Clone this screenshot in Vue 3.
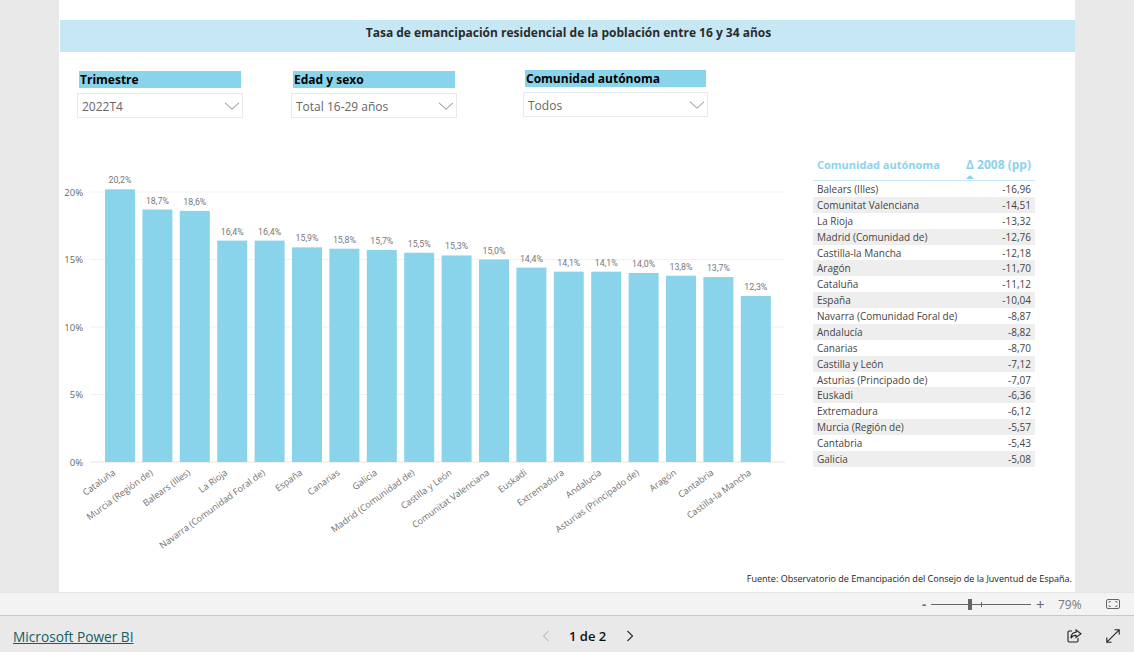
<template>
  <div class="app">
    <div class="canvas">
      <div class="title">Tasa de emancipación residencial de la población entre 16 y 34 años</div>

      <div class="slicers">
        <div v-for="s in slicers" :key="s.label" class="slicer" :class="s.cls">
          <div class="slicer-label">{{ s.label }}</div>
          <div class="slicer-box">
            <span class="slicer-value">{{ s.value }}</span>
            <svg width="16" height="8" viewBox="0 0 16 8"><path d="M1 .8 8 7.2 15 .8" fill="none" stroke="#8a8a8a" stroke-width="1" /></svg>
          </div>
        </div>
      </div>

      <div class="main">
        <svg class="chart" width="750" height="400" viewBox="59 158 750 400">
          <!-- Grid lines -->
          <g>
            <line v-for="t in ticks" :key="t" x1="90" x2="785" :y1="yOf(t)" :y2="yOf(t)" :stroke="t === 0 ? '#e6e6e6' : '#f1f1f1'" stroke-width="1" />
            <text v-for="t in ticks" :key="'t' + t" x="83" :y="yOf(t) + 3.5" text-anchor="end" class="axis">{{ t }}%</text>
          </g>

          <!-- Bars -->
          <g v-for="(b, i) in bars" :key="b.name">
            <rect :x="xOf(i)" :y="yOf(b.value)" width="30" :height="462 - yOf(b.value)" fill="#8ad4eb" />
            <text :x="xOf(i) + 15" :y="yOf(b.value) - 6" text-anchor="middle" class="value">{{ b.value.toFixed(1).replace('.', ',') }}%</text>
            <text :transform="`translate(${xOf(i) + 11} 474) rotate(-36)`" text-anchor="end" class="cat">{{ b.name }}</text>
          </g>
        </svg>

        <div class="table">
          <div class="thead">
            <span>Comunidad autónoma</span>
            <span class="delta">Δ 2008 (pp)</span>
            <i class="sort"></i>
          </div>
          <div v-for="(r, i) in rows" :key="r[0]" class="row" :class="{ odd: i % 2 === 1 }">
            <span>{{ r[0] }}</span>
            <span>{{ r[1] }}</span>
          </div>
        </div>
      </div>

      <div class="source">Fuente: Observatorio de Emancipación del Consejo de la Juventud de España.</div>
    </div>

    <div class="zoombar">
      <span class="minus">-</span>
      <div class="slider"><i class="thumb"></i><i class="tick"></i></div>
      <span class="plus">+</span>
      <span class="pct">79%</span>
      <svg class="fit" width="14" height="10" viewBox="0 0 14 10" fill="none" stroke="#666" stroke-width="1">
        <rect x=".5" y=".5" width="13" height="9" rx="1.5" />
        <path d="M3 4V2.500h2M9 2.500h2V4M11 6v1.500H9M5 7.500H3V6" stroke="#888" />
      </svg>
    </div>

    <div class="footer">
      <a class="brand">Microsoft Power BI</a>
      <div class="pager">
        <svg width="8" height="12" viewBox="0 0 8 12"><path d="M6.500 1 1.500 6l5 5" fill="none" stroke="#c4c4c4" stroke-width="1.2" /></svg>
        <span class="pages">1 de 2</span>
        <svg width="8" height="12" viewBox="0 0 8 12"><path d="M1.500 1l5 5-5 5" fill="none" stroke="#333" stroke-width="1.2" /></svg>
      </div>
      <div class="actions">
        <svg width="15" height="14" viewBox="0 0 15 14" fill="none" stroke="#222" stroke-width="1.1">
          <path d="M5 2H2.200C1.500 2 1 2.500 1 3.200v8.600c0 .7.5 1.200 1.200 1.200h7.600c.7 0 1.200-.5 1.200-1.200V9" />
          <path d="M9 1l5 3.700-5 3.800V6.300C6.500 6.200 5 7.200 4 9.200 4 5.500 6 3.400 9 3.200z" />
        </svg>
        <svg width="14" height="14" viewBox="0 0 14 14" fill="none" stroke="#222" stroke-width="1.1">
          <path d="M8.500 .8h4.700v4.700M13.200 .8 .8 13.200M.8 8.500v4.700h4.700" />
        </svg>
      </div>
    </div>
  </div>
</template>

<script setup>
const slicers = [
  { label: 'Trimestre', value: '2022T4', cls: 's1' },
  { label: 'Edad y sexo', value: 'Total 16-29 años', cls: 's2' },
  { label: 'Comunidad autónoma', value: 'Todos', cls: 's3' }
]

const ticks = [0, 5, 10, 15, 20]

const bars = [
  { name: 'Cataluña', value: 20.2 },
  { name: 'Murcia (Región de)', value: 18.7 },
  { name: 'Balears (Illes)', value: 18.6 },
  { name: 'La Rioja', value: 16.4 },
  { name: 'Navarra (Comunidad Foral de)', value: 16.4 },
  { name: 'España', value: 15.9 },
  { name: 'Canarias', value: 15.8 },
  { name: 'Galicia', value: 15.7 },
  { name: 'Madrid (Comunidad de)', value: 15.5 },
  { name: 'Castilla y León', value: 15.3 },
  { name: 'Comunitat Valenciana', value: 15.0 },
  { name: 'Euskadi', value: 14.4 },
  { name: 'Extremadura', value: 14.1 },
  { name: 'Andalucía', value: 14.1 },
  { name: 'Asturias (Principado de)', value: 14.0 },
  { name: 'Aragón', value: 13.8 },
  { name: 'Cantabria', value: 13.7 },
  { name: 'Castilla-la Mancha', value: 12.3 }
]

const rows = [
  ['Balears (Illes)', '-16,96'],
  ['Comunitat Valenciana', '-14,51'],
  ['La Rioja', '-13,32'],
  ['Madrid (Comunidad de)', '-12,76'],
  ['Castilla-la Mancha', '-12,18'],
  ['Aragón', '-11,70'],
  ['Cataluña', '-11,12'],
  ['España', '-10,04'],
  ['Navarra (Comunidad Foral de)', '-8,87'],
  ['Andalucía', '-8,82'],
  ['Canarias', '-8,70'],
  ['Castilla y León', '-7,12'],
  ['Asturias (Principado de)', '-7,07'],
  ['Euskadi', '-6,36'],
  ['Extremadura', '-6,12'],
  ['Murcia (Región de)', '-5,57'],
  ['Cantabria', '-5,43'],
  ['Galicia', '-5,08']
]

const xOf = (i) => 105 + i * 37.4
const yOf = (v) => 462 - v * 13.5
</script>

<style>
html,
body {
  margin: 0;
  background: #e9e9e9;
}
</style>

<style scoped>
.app {
  display: flex;
  flex-direction: column;
  width: 1134px;
  height: 652px;
  overflow: hidden;
  background: #e9e9e9;
  font-family: "Open Sans", "Noto Sans", sans-serif;
  color: #333;
}

.canvas {
  display: flex;
  flex-direction: column;
  box-sizing: border-box;
  width: 1016px;
  height: 592px;
  margin-left: 59px;
  padding-top: 20px;
  background: #fff;
}

.title {
  margin-left: 1px;
  padding-left: 2px;
  height: 32px;
  line-height: 25px;
  text-align: center;
  font-size: 12px;
  font-weight: 700;
  color: #2b2b2b;
  background: #c5e8f4;
}

.slicers {
  display: flex;
  margin: 18px 0 0 18px;
  height: 48px;
}

.slicer {
  display: flex;
  flex-direction: column;
  gap: 5px;
  width: 166px;
}

.s1 { margin-top: 1px; }
.s2 { margin: 1px 0 0 48px; }
.s3 { margin-left: 66px; width: 185px; }

.slicer-label {
  height: 17px;
  margin: 0 2px;
  padding-left: 1px;
  line-height: 17px;
  font-size: 12px;
  font-weight: 700;
  color: #000;
  background: #8ad4eb;
}

.slicer-box {
  display: flex;
  align-items: center;
  justify-content: space-between;
  box-sizing: border-box;
  height: 25px;
  padding: 0 2px 0 4px;
  border: 1px solid #eaeaea;
  font-size: 12px;
  color: #666;
}

.slicer-value {
  padding-top: 2px;
}

.main {
  display: flex;
  margin-top: 40px;
}

.chart {
  display: block;
  flex: none;
}

.axis {
  font-family: "Open Sans", sans-serif;
  font-size: 9.5px;
  fill: #666;
}

.value {
  font-family: Roboto, sans-serif;
  font-size: 8.8px;
  fill: #777;
}

.cat {
  font-family: "Open Sans", sans-serif;
  font-size: 9.1px;
  fill: #707070;
}

.table {
  width: 222px;
  margin-left: 4px;
  font-size: 10px;
  color: #444;
}

.thead {
  position: relative;
  display: flex;
  justify-content: space-between;
  box-sizing: border-box;
  height: 23px;
  padding: 0 4px;
  border-bottom: 1px solid #c5e8f4;
  font-size: 11px;
  font-weight: 700;
  color: #8ad4eb;
  line-height: 14px;
}

.delta {
  font-size: 12px;
}

.sort {
  position: absolute;
  left: 153px;
  bottom: 1px;
  width: 0;
  height: 0;
  border: 4px solid transparent;
  border-top: 0;
  border-bottom: 4px solid #8ad4eb;
}

.row {
  display: flex;
  justify-content: space-between;
  height: 15.88px;
  padding: 0 4px;
  line-height: 16px;
}

.row.odd {
  background: #eeeeee;
}

.source {
  margin-top: auto;
  padding: 0 3px 7px 0;
  text-align: right;
  font-size: 9.05px;
  color: #222;
}

.zoombar {
  display: flex;
  align-items: center;
  box-sizing: border-box;
  height: 24px;
  border-top: 1px solid #e4e4e4;
  border-bottom: 1px solid #c8c8c8;
  background: #f3f3f3;
  color: #666;
}

.minus {
  margin-left: 922px;
  width: 9px;
  font-size: 13px;
  font-weight: 700;
}

.slider {
  position: relative;
  width: 100px;
  height: 1px;
  background: #666;
}

.thumb {
  position: absolute;
  left: 37px;
  top: -5px;
  width: 4px;
  height: 11px;
  background: #666;
}

.tick {
  position: absolute;
  left: 50px;
  top: -2px;
  width: 1px;
  height: 5px;
  background: #666;
}

.plus {
  margin-left: 5px;
  width: 11px;
  font-size: 15px;
  line-height: 15px;
}

.pct {
  margin-left: 11px;
  width: 48px;
  font-size: 12px;
  color: #777;
}

.fit {
  flex: none;
}

.footer {
  position: relative;
  display: flex;
  flex: 1;
  align-items: center;
  padding: 4px 14px 0 13px;
}

.brand {
  font-size: 13.7px;
  color: #0f5f66;
  text-decoration: underline;
}

.pager {
  position: absolute;
  left: 542px;
  display: flex;
  align-items: center;
  gap: 20px;
  font-size: 13px;
  font-weight: 600;
  color: #111;
}

.pages {
  margin-left: -1px;
}

.actions {
  display: flex;
  gap: 24px;
  margin-left: auto;
}
</style>
